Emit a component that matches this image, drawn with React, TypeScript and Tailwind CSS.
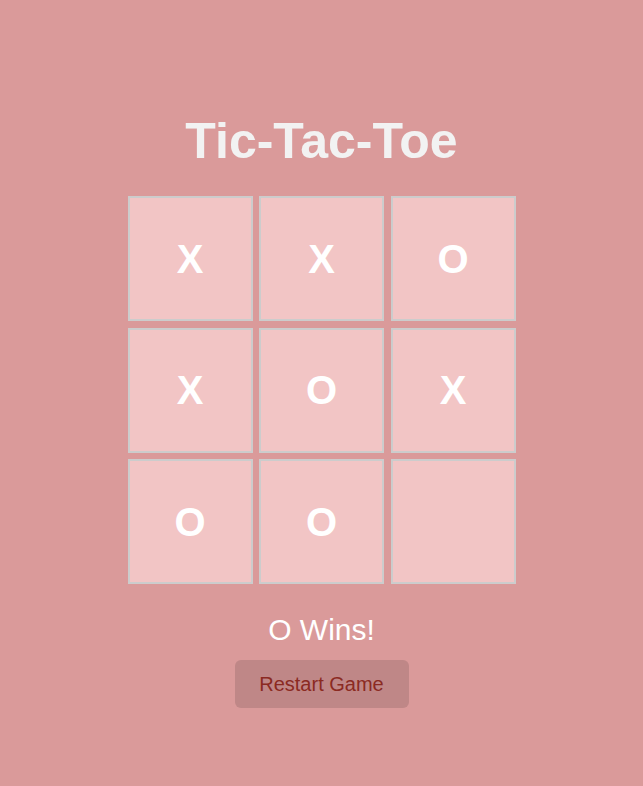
const board = ['X', 'X', 'O', 'X', 'O', 'X', 'O', 'O', ''];

export default function App() {
  return (
    <div className="min-h-screen w-full bg-[#da9a9a] flex flex-col items-center pt-[113px]">
      <h1 className="font-['Liberation_Sans',Arial,sans-serif] text-[50px] leading-[57px] font-bold text-[#f2f2f2]">
        Tic-Tac-Toe
      </h1>
      <div className="mt-[26px] grid grid-cols-[repeat(3,125px)] grid-rows-[repeat(3,125px)] gap-[6.5px]">
        {board.map((v, i) => (
          <div
            key={i}
            className="flex items-center justify-center bg-[#f2c5c5] border-2 border-[#cccccc] text-white font-bold text-[40px] font-['Liberation_Sans',Arial,sans-serif]"
          >
            {v}
          </div>
        ))}
      </div>
      <p className="mt-[29px] font-['Liberation_Sans',Arial,sans-serif] text-[30px] leading-[34px] text-white">
        O Wins!
      </p>
      <button className="mt-[13px] w-[174px] h-[48px] rounded-[6px] bg-[#bf8787] text-[#8b2a22] text-[20px] font-['Liberation_Sans',Arial,sans-serif]">
        Restart Game
      </button>
    </div>
  );
}
